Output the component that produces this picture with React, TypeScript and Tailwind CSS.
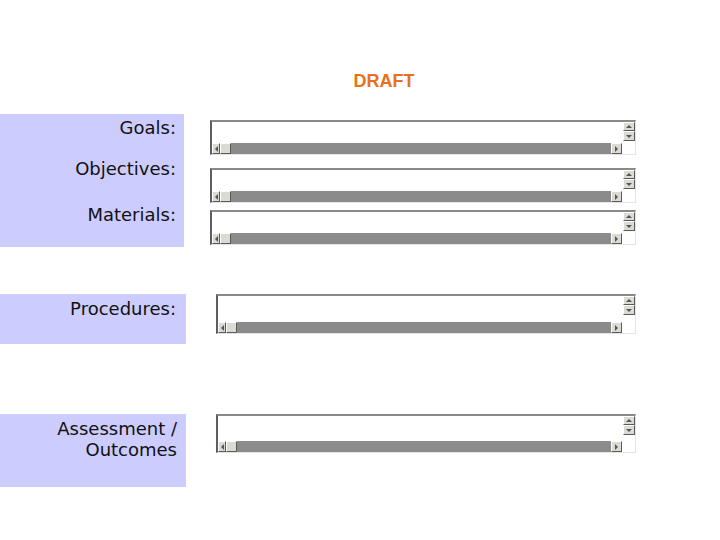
import React from 'react';

const Arrow: React.FC<{ dir: 'up' | 'down' | 'left' | 'right' }> = ({ dir }) => {
  const cls = {
    up: 'border-l-[3px] border-r-[3px] border-b-[3px] border-l-transparent border-r-transparent border-b-[#555]',
    down: 'border-l-[3px] border-r-[3px] border-t-[3px] border-l-transparent border-r-transparent border-t-[#555]',
    left: 'border-t-[3px] border-b-[3px] border-r-[3px] border-t-transparent border-b-transparent border-r-[#555]',
    right: 'border-t-[3px] border-b-[3px] border-l-[3px] border-t-transparent border-b-transparent border-l-[#555]',
  }[dir];
  return <span className={`block w-0 h-0 ${cls}`} />;
};

const SbButton: React.FC<{ dir: 'up' | 'down' | 'left' | 'right'; className?: string }> = ({ dir, className = '' }) => (
  <div
    className={`flex items-center justify-center bg-[#dcdad4] border-t border-l border-t-white border-l-white border-r border-b border-r-[#5a5a5a] border-b-[#5a5a5a] ${className}`}
  >
    <Arrow dir={dir} />
  </div>
);

const TextBox: React.FC<{ className: string }> = ({ className }) => (
  <div className={`flex flex-col bg-white border-t-2 border-l-2 border-t-[#8a8a8a] border-l-[#5e5e5e] border-r border-b border-r-[#e4e4e4] border-b-[#e4e4e4] ${className}`}>
    {/* text area + vertical scrollbar */}
    <div className="flex flex-1 min-h-0">
      <div className="flex-1 bg-white" />
      <div className="flex flex-col w-[12px]">
        <SbButton dir="up" className="h-[9px]" />
        <SbButton dir="down" className="h-[10px]" />
      </div>
    </div>
    {/* horizontal scrollbar */}
    <div className="flex h-[11px] shrink-0">
      <SbButton dir="left" className="w-[8px]" />
      <div className="w-[11px] bg-[#dcdad4] border-t border-l border-t-white border-l-white border-r border-b border-r-[#5a5a5a] border-b-[#5a5a5a]" />
      <div className="flex-1 bg-[#8b8b8b]" />
      <SbButton dir="right" className="w-[11px]" />
      <div className="w-[13px] bg-white" />
    </div>
  </div>
);

const labelCls = "text-[18px] leading-[22px] text-[#111] text-right";

export default function App() {
  return (
    <div
      className="w-[720px] h-[540px] bg-white overflow-hidden"
      style={{ fontFamily: '"DejaVu Sans", Verdana, sans-serif' }}
    >
      <div className="pt-[70px] pl-[48px] text-center">
        <span
          className="text-[18px] leading-[20px] font-bold text-[#e8701c]"
          style={{ fontFamily: '"Liberation Sans", Arial, sans-serif' }}
        >
          DRAFT
        </span>
      </div>

      {/* Goals / Objectives / Materials */}
      <div className="flex mt-[20px]">
        <div className="w-[184px] h-[133px] bg-[#ccccff] pr-[8px] flex flex-col">
          <div className={`${labelCls} mt-[3px]`}>Goals:</div>
          <div className={`${labelCls} mt-[19px]`}>Objectives:</div>
          <div className={`${labelCls} mt-[24px]`}>Materials:</div>
        </div>
        <div className="ml-[26px] pt-[6px] flex flex-col">
          <TextBox className="w-[426px] h-[35px]" />
          <TextBox className="w-[426px] h-[35px] mt-[13px]" />
          <TextBox className="w-[426px] h-[35px] mt-[7px]" />
        </div>
      </div>

      {/* Procedures */}
      <div className="flex mt-[47px]">
        <div className="w-[186px] h-[50px] bg-[#ccccff] pr-[10px] pt-[4px]">
          <div className={labelCls}>Procedures:</div>
        </div>
        <TextBox className="ml-[30px] w-[420px] h-[40px]" />
      </div>

      {/* Assessment / Outcomes */}
      <div className="flex mt-[70px]">
        <div className="w-[186px] h-[73px] bg-[#ccccff] pr-[9px] pt-[4px]">
          <div className="text-[18px] leading-[21px] text-[#111] text-right">
            Assessment /<br />Outcomes
          </div>
        </div>
        <TextBox className="ml-[30px] w-[420px] h-[39px]" />
      </div>
    </div>
  );
}
